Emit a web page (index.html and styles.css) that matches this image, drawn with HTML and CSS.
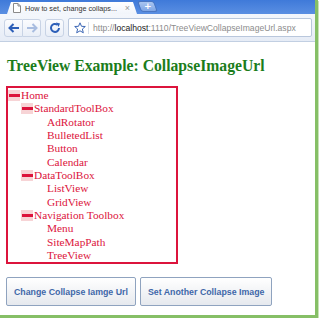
FILE: index.html
```html
<!DOCTYPE html>
<html lang="en">
<head>
    <meta charset="UTF-8">
    <title>How to set, change collapse image url</title>
    <link rel="stylesheet" href="styles.css">
</head>
<body>
    <div class="window">
        <!-- barra delle schede -->
        <div class="tabbar">
            <div class="tab">
                <svg class="doc-icon" width="8" height="10" viewBox="0 0 8 10">
                    <path d="M0.5 0.5 H5 L7.5 3 V9.5 H0.5 Z" fill="#fff" stroke="#8a8a8a"/>
                    <path d="M5 0.5 V3 H7.5" fill="none" stroke="#8a8a8a"/>
                </svg>
                <span class="tab-title">How to set, change collaps...</span>
                <span class="tab-close">×</span>
            </div>
            <div class="newtab"><span>+</span></div>
        </div>

        <!-- barra degli strumenti -->
        <div class="toolbar">
            <div class="navbtn">
                <svg width="12" height="10" viewBox="0 0 12 10"><path d="M11 5 H2 M5.5 1 L1.5 5 L5.5 9" fill="none" stroke="#2d5fb8" stroke-width="2"/></svg>
            </div>
            <div class="navbtn fwd">
                <svg width="12" height="10" viewBox="0 0 12 10"><path d="M1 5 H10 M6.5 1 L10.5 5 L6.5 9" fill="none" stroke="#a9bde0" stroke-width="2"/></svg>
            </div>
            <div class="navbtn reload">
                <svg width="12" height="12" viewBox="0 0 12 12"><path d="M10 6 A4 4 0 1 1 8.5 2.8" fill="none" stroke="#2d5fb8" stroke-width="2"/><path d="M7 0.5 L11 1.5 L9.5 5 Z" fill="#2d5fb8"/></svg>
            </div>
            <div class="omnibox">
                <svg class="star" width="12" height="12" viewBox="0 0 12 12"><path d="M6 0.8 L7.5 4.3 L11.3 4.5 L8.4 7 L9.3 10.8 L6 8.8 L2.7 10.8 L3.6 7 L0.7 4.5 L4.5 4.3 Z" fill="none" stroke="#3b66b5" stroke-width="1"/></svg>
                <span class="url"><span class="dim">http://</span>localhost<span class="dim">:1110/TreeViewCollapseImageUrl.aspx</span></span>
            </div>
        </div>

        <!-- contenuto della pagina -->
        <div class="page">
            <h2 class="title">TreeView Example: CollapseImageUrl</h2>

            <div class="tree">
                <div class="node lvl0"><span class="toggle"></span>Home</div>
                <div class="node lvl1"><span class="toggle"></span>StandardToolBox</div>
                <div class="node lvl2"><span class="spacer"></span>AdRotator</div>
                <div class="node lvl2"><span class="spacer"></span>BulletedList</div>
                <div class="node lvl2"><span class="spacer"></span>Button</div>
                <div class="node lvl2"><span class="spacer"></span>Calendar</div>
                <div class="node lvl1"><span class="toggle"></span>DataToolBox</div>
                <div class="node lvl2"><span class="spacer"></span>ListView</div>
                <div class="node lvl2"><span class="spacer"></span>GridView</div>
                <div class="node lvl1"><span class="toggle"></span>Navigation Toolbox</div>
                <div class="node lvl2"><span class="spacer"></span>Menu</div>
                <div class="node lvl2"><span class="spacer"></span>SiteMapPath</div>
                <div class="node lvl2"><span class="spacer"></span>TreeView</div>
            </div>

            <div class="actions">
                <button type="button" class="btn">Change Collapse Iamge Url</button>
                <button type="button" class="btn">Set Another Collapse Image</button>
            </div>
        </div>
    </div>
</body>
</html>
```

FILE: styles.css
```css
/* Pagina base */
body {
    margin: 0;
    padding: 0;
    background-color: #fff;
    font-family: "Liberation Serif", serif;
}

/* Finestra del browser con bordo verde */
.window {
    width: 315px;
    height: 315px;
    border-right: 3px solid #86bf66;
    border-bottom: 3px solid #86bf66;
    box-shadow: 1px 1px 0 #c8e3b8;
    display: flex;
    flex-direction: column;
    overflow: hidden;
    background-color: #fff;
}

/* Barra delle schede */
.tabbar {
    height: 14px;
    flex: none;
    display: flex;
    align-items: flex-end;
    background: linear-gradient(#3f7ad9, #5a8fe2);
    padding-left: 7px;
}

.tab {
    width: 130px;
    height: 12px;
    display: flex;
    align-items: center;
    gap: 4px;
    padding: 0 7px 0 6px;
    box-sizing: border-box;
    background: linear-gradient(#ffffff, #f1f5fb);
    border-radius: 4px 4px 0 0;
    clip-path: polygon(0 100%, 4px 0, calc(100% - 4px) 0, 100% 100%);
    font-family: "Liberation Sans", sans-serif;
    font-size: 7.2px;
    color: #333;
}

.doc-icon {
    flex: none;
}

.tab-title {
    flex: 1;
    white-space: nowrap;
}

.tab-close {
    flex: none;
    color: #999;
    font-size: 9px;
}

.newtab {
    width: 15px;
    height: 9px;
    margin: 0 0 2px 2px;
    background: linear-gradient(#a9c5f0, #7ea6e6);
    border: 1px solid #4a76c2;
    border-radius: 3px;
    transform: skewX(20deg);
    display: flex;
    align-items: center;
    justify-content: center;
    color: #fff;
    font-family: "DejaVu Sans", sans-serif;
    font-size: 9px;
    font-weight: bold;
    line-height: 1;
}

.newtab span {
    transform: skewX(-20deg);
}

/* Barra degli strumenti */
.toolbar {
    height: 28px;
    flex: none;
    display: flex;
    align-items: center;
    padding: 0 3px 0 4px;
    box-sizing: border-box;
    background: linear-gradient(#f4f7fc, #e6ecf6);
    border-bottom: 1px solid #c2cfe2;
}

.navbtn {
    width: 17px;
    height: 16px;
    display: flex;
    align-items: center;
    justify-content: center;
    border: 1px solid #c8d3e5;
    background: linear-gradient(#fbfcfe, #e9eef7);
    border-radius: 3px 0 0 3px;
}

.navbtn.fwd {
    border-left: none;
    border-radius: 0 3px 3px 0;
}

.navbtn.reload {
    margin-left: 4px;
    border-radius: 3px;
}

.omnibox {
    flex: 1;
    height: 17px;
    margin-left: 4px;
    display: flex;
    align-items: center;
    gap: 4px;
    padding-left: 3px;
    border: 1px solid #b9c7dc;
    border-radius: 2px;
    background-color: #fff;
    overflow: hidden;
}

.star {
    flex: none;
    padding: 0 2px;
    border-right: 1px solid #d6deea;
}

.url {
    font-family: "Liberation Sans", sans-serif;
    font-size: 8.6px;
    color: #222;
    white-space: nowrap;
}

.url .dim {
    color: #8c8c8c;
}

/* Contenuto */
.page {
    padding: 0 0 0 6px;
}

.title {
    margin: 14px 0 10px 1px;
    font-size: 15.7px;
    line-height: 20px;
    font-weight: bold;
    color: #1b7d1b;
}

/* Albero */
.tree {
    width: 168px;
    border: 2px solid #dc143c;
    padding: 1px 0 0 0;
    font-size: 11.3px;
    color: #dc143c;
}

.node {
    height: 13.33px;
    line-height: 13.33px;
    display: flex;
    align-items: center;
    white-space: nowrap;
}

.lvl1 {
    padding-left: 13px;
}

.lvl2 {
    padding-left: 26px;
}

.toggle,
.spacer {
    width: 12px;
    height: 11px;
    margin-right: 1px;
    flex: none;
    position: relative;
}

.toggle {
    background-color: #f7d4d6;
}

/* barra rossa del segno meno */
.toggle::after {
    content: "";
    position: absolute;
    left: 1px;
    right: 0;
    top: 4px;
    height: 3px;
    background-color: #dc143c;
}

/* Bottoni */
.actions {
    display: flex;
    gap: 4px;
    margin-top: 13px;
}

.btn {
    height: 29px;
    padding: 0 7px;
    border: 1px solid #8fa3bf;
    border-radius: 2px;
    background: linear-gradient(#ffffff, #e6e9ee);
    color: #3f68a9;
    font-family: "Liberation Sans", sans-serif;
    font-size: 8.8px;
    font-weight: bold;
}
```
